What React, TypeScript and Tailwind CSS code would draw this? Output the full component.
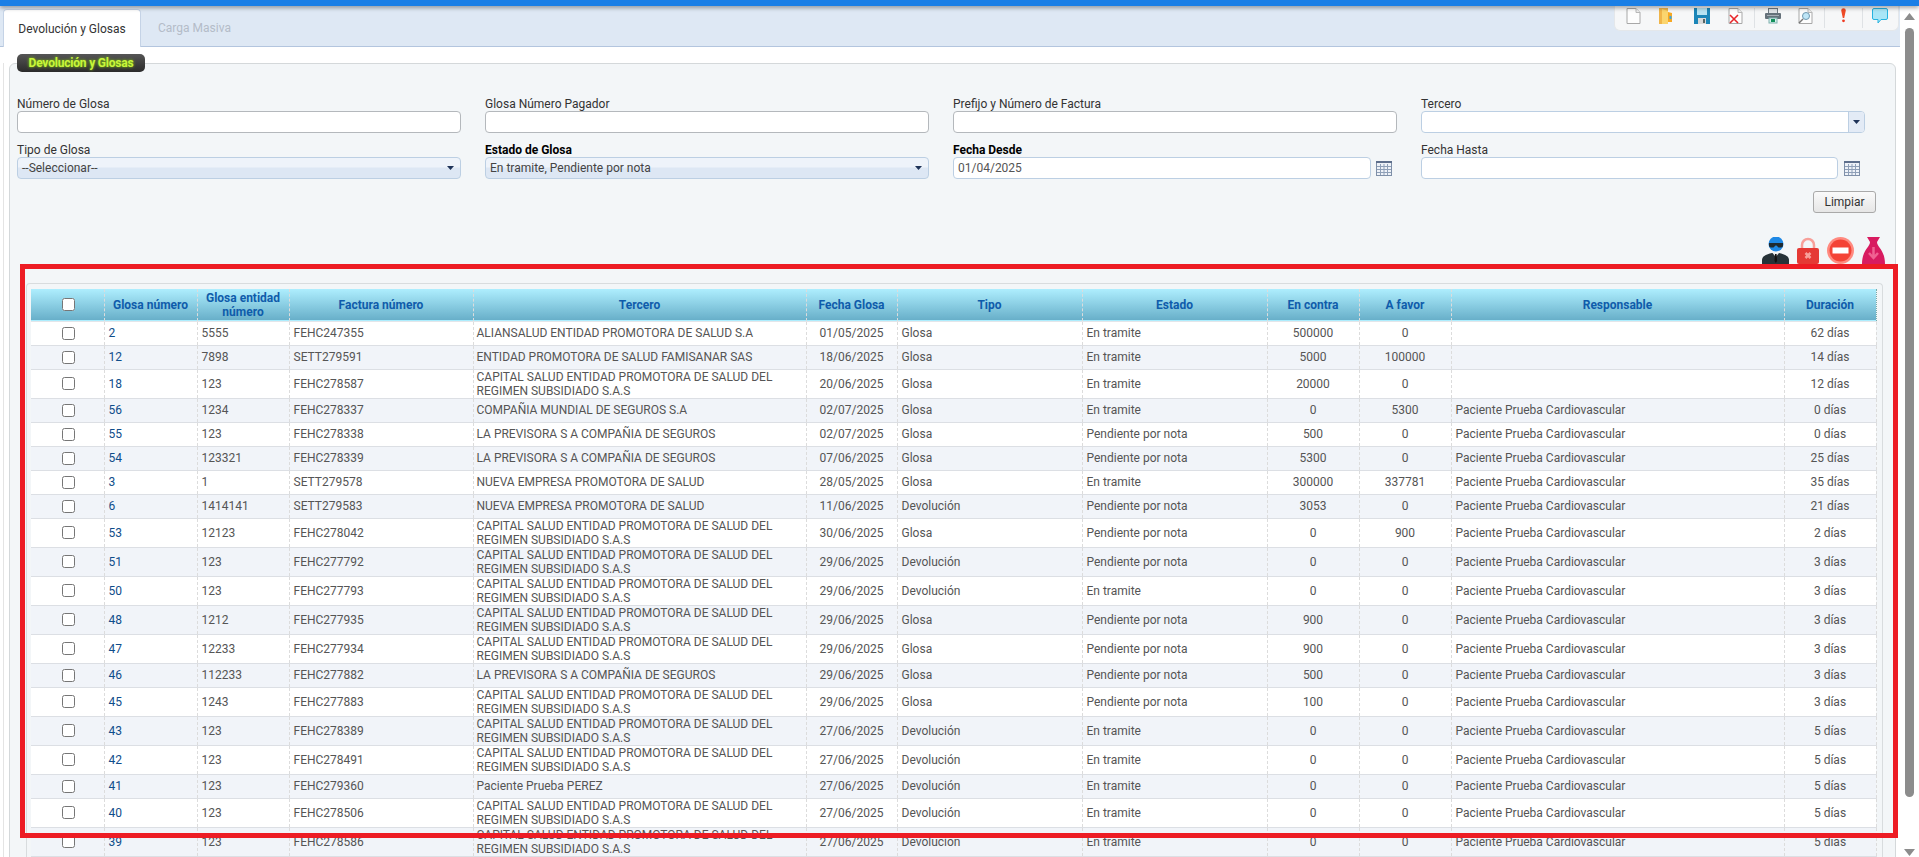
import React from "react";

const CAP = "CAPITAL SALUD ENTIDAD PROMOTORA DE SALUD DEL REGIMEN SUBSIDIADO S.A.S";
const LPS = "LA PREVISORA S A COMPAÑIA DE SEGUROS";
const NEPS = "NUEVA EMPRESA PROMOTORA DE SALUD";
const PAC = "Paciente Prueba Cardiovascular";
const TR = "En tramite";
const PN = "Pendiente por nota";

type Row = [string, string, string, string, string, string, string, string, string, string, string];

const ROWS: Row[] = [
  ["2", "5555", "FEHC247355", "ALIANSALUD ENTIDAD PROMOTORA DE SALUD S.A", "01/05/2025", "Glosa", TR, "500000", "0", "", "62 días"],
  ["12", "7898", "SETT279591", "ENTIDAD PROMOTORA DE SALUD FAMISANAR SAS", "18/06/2025", "Glosa", TR, "5000", "100000", "", "14 días"],
  ["18", "123", "FEHC278587", CAP, "20/06/2025", "Glosa", TR, "20000", "0", "", "12 días"],
  ["56", "1234", "FEHC278337", "COMPAÑIA MUNDIAL DE SEGUROS S.A", "02/07/2025", "Glosa", TR, "0", "5300", PAC, "0 días"],
  ["55", "123", "FEHC278338", LPS, "02/07/2025", "Glosa", PN, "500", "0", PAC, "0 días"],
  ["54", "123321", "FEHC278339", LPS, "07/06/2025", "Glosa", PN, "5300", "0", PAC, "25 días"],
  ["3", "1", "SETT279578", NEPS, "28/05/2025", "Glosa", TR, "300000", "337781", PAC, "35 días"],
  ["6", "1414141", "SETT279583", NEPS, "11/06/2025", "Devolución", PN, "3053", "0", PAC, "21 días"],
  ["53", "12123", "FEHC278042", CAP, "30/06/2025", "Glosa", PN, "0", "900", PAC, "2 días"],
  ["51", "123", "FEHC277792", CAP, "29/06/2025", "Devolución", PN, "0", "0", PAC, "3 días"],
  ["50", "123", "FEHC277793", CAP, "29/06/2025", "Devolución", TR, "0", "0", PAC, "3 días"],
  ["48", "1212", "FEHC277935", CAP, "29/06/2025", "Glosa", PN, "900", "0", PAC, "3 días"],
  ["47", "12233", "FEHC277934", CAP, "29/06/2025", "Glosa", PN, "900", "0", PAC, "3 días"],
  ["46", "112233", "FEHC277882", LPS, "29/06/2025", "Glosa", PN, "500", "0", PAC, "3 días"],
  ["45", "1243", "FEHC277883", CAP, "29/06/2025", "Glosa", PN, "100", "0", PAC, "3 días"],
  ["43", "123", "FEHC278389", CAP, "27/06/2025", "Devolución", TR, "0", "0", PAC, "5 días"],
  ["42", "123", "FEHC278491", CAP, "27/06/2025", "Devolución", TR, "0", "0", PAC, "5 días"],
  ["41", "123", "FEHC279360", "Paciente Prueba PEREZ", "27/06/2025", "Devolución", TR, "0", "0", PAC, "5 días"],
  ["40", "123", "FEHC278506", CAP, "27/06/2025", "Devolución", TR, "0", "0", PAC, "5 días"],
  ["39", "123", "FEHC278586", CAP, "27/06/2025", "Devolución", TR, "0", "0", PAC, "5 días"],
];

const HEADERS = [
  "Glosa número",
  "Glosa entidad número",
  "Factura número",
  "Tercero",
  "Fecha Glosa",
  "Tipo",
  "Estado",
  "En contra",
  "A favor",
  "Responsable",
  "Duración",
];

const WIDTHS = [73, 93, 92, 184, 333, 91, 185, 185, 92, 92, 333, 92];
const SEP = "border-r border-dashed border-r-[#dcdcdc]";

function Calendar() {
  return (
    <svg width="16" height="15" viewBox="0 0 16 15" className="shrink-0">
      <rect x="0.5" y="0.5" width="15" height="14" fill="#eef2f8" stroke="#7e8fa8" />
      <rect x="0" y="0" width="16" height="2" fill="#5e6f8c" />
      <path d="M1 5.5h14M1 8.5h14M1 11.5h14M4.5 3v11M8 3v11M11.5 3v11" stroke="#8fa0b8" strokeWidth="1" fill="none" />
    </svg>
  );
}

function Arrow() {
  return (
    <svg width="7" height="4" viewBox="0 0 7 4">
      <path d="M0 0h7L3.5 4z" fill="#1e3358" />
    </svg>
  );
}

function Doc({ children }: { children?: React.ReactNode }) {
  return (
    <svg width="15" height="16" viewBox="0 0 15 16">
      <path d="M1 .5h9l4 4v11H1z" fill="#fdfdfd" stroke="#a8a8a8" />
      <path d="M10 .5v4h4" fill="#eee" stroke="#b8b8b8" />
      {children}
    </svg>
  );
}

function Folder() {
  return (
    <svg width="14" height="16" viewBox="0 0 14 16">
      <path d="M0 0h9v16H0z" fill="#f0b54a" />
      <path d="M3 1l6 2v13H3z" fill="#fbd56e" />
      <path d="M9 4l4 1v9H9z" fill="#f7a823" />
      <rect x="10.5" y="8" width="2" height="3" fill="#3aa6e0" />
    </svg>
  );
}

function Save() {
  return (
    <svg width="16" height="16" viewBox="0 0 16 16">
      <path d="M0 0h16v16H0z" fill="#1b86b8" />
      <rect x="3" y="0" width="10" height="7" fill="#b6e3f2" />
      <rect x="4" y="10" width="8" height="6" fill="#d9d9d9" />
      <rect x="9" y="11" width="2" height="4" fill="#566" />
    </svg>
  );
}

function Printer() {
  return (
    <svg width="16" height="16" viewBox="0 0 16 16">
      <rect x="3.5" y="0.5" width="9" height="5" fill="#dfe3e6" stroke="#6f7a82" />
      <rect x="0" y="5" width="16" height="6" rx="1" fill="#65717a" />
      <rect x="2" y="7" width="12" height="1" fill="#a5afb6" />
      <rect x="4" y="10" width="8" height="5" fill="#d8f1ee" stroke="#7fb0ad" />
      <rect x="6" y="11" width="4" height="3" fill="#12905a" />
    </svg>
  );
}

function Bang() {
  return (
    <svg width="7" height="15" viewBox="0 0 7 15">
      <path d="M1.2 2.5a2.3 2.3 0 0 1 4.6 0L4.2 10H2.8z" fill="#ef4a26" />
      <circle cx="3.5" cy="12.8" r="1.4" fill="#ef3a22" />
    </svg>
  );
}

function Chat() {
  return (
    <svg width="16" height="16" viewBox="0 0 16 16">
      <path d="M2 .5h12a1.5 1.5 0 0 1 1.5 1.5v8a1.5 1.5 0 0 1-1.5 1.5H9L6 15v-3.5H2A1.5 1.5 0 0 1 .5 10V2A1.5 1.5 0 0 1 2 .5z" fill="#a9e6f7" stroke="#26b3e0" />
    </svg>
  );
}

function Agent() {
  return (
    <svg width="27" height="27" viewBox="0 0 27 27">
      <circle cx="14" cy="7" r="7.5" fill="#1e88e5" />
      <path d="M7 6h14v2.5a2 2 0 0 1-2 2h-2.5l-2-2h-1l-2 2H9a2 2 0 0 1-2-2z" fill="#1f2a30" />
      <path d="M0 27v-4c0-4 5-6 10-7h7c5 1 10 3 10 7v4z" fill="#263238" />
      <path d="M10.5 16h6.5l-3.2 4z" fill="#eceff1" />
      <path d="M13 17h1.6l.5 7-1.3 2-1.3-2z" fill="#111" />
    </svg>
  );
}

function Lock() {
  return (
    <svg width="22" height="27" viewBox="0 0 22 27">
      <path d="M5 12V8a6 6 0 0 1 12 0v4" fill="none" stroke="#f7a09a" strokeWidth="2.5" />
      <rect x="0" y="11" width="22" height="16" rx="2" fill="#e53935" />
      <path d="M8.5 16l5 5M13.5 16l-5 5" stroke="#f7a09a" strokeWidth="2.5" />
    </svg>
  );
}

function NoEntry() {
  return (
    <svg width="27" height="27" viewBox="0 0 27 27">
      <circle cx="13.5" cy="13.5" r="13.5" fill="#ff8a80" />
      <circle cx="13.5" cy="13.5" r="11" fill="#f44336" />
      <rect x="5.5" y="10.5" width="16" height="6" fill="#fff" />
    </svg>
  );
}

function Bag() {
  return (
    <svg width="23" height="27" viewBox="0 0 23 27">
      <path d="M5 0h13l-3 5H8z" fill="#d81b60" />
      <path d="M8 5h7c0 5 8 8 8 22H0C0 13 8 10 8 5z" fill="#d81b60" />
      <path d="M11.5 10v10M7 16l4.5 5 4.5-5" fill="none" stroke="#f06292" strokeWidth="2.5" />
    </svg>
  );
}

function Sep({ className }: { className: string }) {
  return <div className={`h-[20px] w-px self-start bg-[#dfe2e5] ${className}`} />;
}

function Toolbar() {
  return (
    <div className="flex h-[25px] w-[285px] items-start rounded-b-md border border-t-0 border-[#e4e7ea] bg-[#f6f7f8] pt-[2px]">
      <div className="ml-[11px]"><Doc /></div>
      <div className="ml-[18px]"><Folder /></div>
      <div className="ml-[21px]"><Save /></div>
      <div className="ml-[18px]">
        <Doc>
          <path d="M2 7l8 8M10 7l-8 8" stroke="#e8262a" strokeWidth="1.6" />
        </Doc>
      </div>
      <Sep className="ml-[11px]" />
      <div className="ml-[10px]"><Printer /></div>
      <div className="ml-[17px]">
        <Doc>
          <circle cx="8" cy="8" r="3.5" fill="#bfe6f7" stroke="#6f98b0" />
          <path d="M5 11l-4 4" stroke="#777" strokeWidth="1.5" />
        </Doc>
      </div>
      <Sep className="ml-[11px]" />
      <div className="ml-[15px]"><Bang /></div>
      <Sep className="ml-[15px]" />
      <div className="ml-[9px]"><Chat /></div>
    </div>
  );
}

function Field({ label, bold, children }: { label: string; bold?: boolean; children: React.ReactNode }) {
  return (
    <div>
      <div className={`h-[14px] text-[12px] leading-[14px] ${bold ? "font-bold text-black" : "text-[#333]"}`}>{label}</div>
      {children}
    </div>
  );
}

const INPUT = "block h-[22px] w-full rounded-[4px] border bg-white px-[4px] text-[12px] text-[#555] outline-none";

function Select({ value }: { value: string }) {
  return (
    <div className="flex h-[22px] items-center justify-between rounded-[4px] border border-[#bccfe3] bg-[linear-gradient(#eef3fa_0%,#eef3fa_45%,#dde7f4_50%,#dde7f4_100%)] pl-[4px] pr-[6px] text-[12px] text-[#444]">
      <span>{value}</span>
      <Arrow />
    </div>
  );
}

function Filters() {
  return (
    <div className="ml-[7px] mt-[33px] grid grid-cols-[444px_444px_444px_444px] gap-x-[24px] gap-y-[10px]">
      <Field label="Número de Glosa">
        <input className={`${INPUT} border-[#b4b8bc]`} />
      </Field>
      <Field label="Glosa Número Pagador">
        <input className={`${INPUT} border-[#b4b8bc]`} />
      </Field>
      <Field label="Prefijo y Número de Factura">
        <input className={`${INPUT} border-[#b4b8bc]`} />
      </Field>
      <Field label="Tercero">
        <div className="flex h-[22px] overflow-hidden rounded-[4px] border border-[#bccfe3] bg-white">
          <div className="flex-1" />
          <div className="flex w-[16px] items-center justify-center border-l border-[#bccfe3] bg-[#e3ebf6]">
            <Arrow />
          </div>
        </div>
      </Field>
      <Field label="Tipo de Glosa">
        <Select value="--Seleccionar--" />
      </Field>
      <Field label="Estado de Glosa" bold>
        <Select value="En tramite, Pendiente por nota" />
      </Field>
      <Field label="Fecha Desde" bold>
        <div className="flex items-center gap-[5px] pr-[5px]">
          <input className={`${INPUT} border-[#bccfe3]`} defaultValue="01/04/2025" />
          <Calendar />
        </div>
      </Field>
      <Field label="Fecha Hasta">
        <div className="flex items-center gap-[6px] pr-[5px]">
          <input className={`${INPUT} border-[#bccfe3]`} />
          <Calendar />
        </div>
      </Field>
    </div>
  );
}

function GlosasTable() {
  return (
    <table className="w-[1845px] table-fixed border-collapse text-[12px] leading-[14px] text-[#555]">
      <colgroup>
        {WIDTHS.map((w, i) => (
          <col key={i} style={{ width: w }} />
        ))}
      </colgroup>
      <thead>
        <tr className="h-[32px] border-b border-[#e3e6ea] bg-[linear-gradient(#aeeefe,#68afc9)]">
          <th className={SEP}>
            <input type="checkbox" className="relative left-[1px] mx-auto block" />
          </th>
          {HEADERS.map((h, i) => (
            <th key={h} className={`px-[4px] text-center font-bold text-[#0f5cab] ${i < HEADERS.length - 1 ? SEP : "border-r border-dotted border-r-[#7aa]"}`}>
              {h}
            </th>
          ))}
        </tr>
      </thead>
      <tbody>
        {ROWS.map((r, idx) => (
          <tr
            key={r[0]}
            className={`${r[3] === CAP ? "h-[29px]" : "h-[24px]"} border-b border-[#dcdfe4] ${idx % 2 ? "bg-[#f1f4f9]" : "bg-white"}`}
          >
            <td className={SEP}>
              <input type="checkbox" className="relative left-[1px] mx-auto block" />
            </td>
            <td className={`px-[4px] text-[#0f4d8a] ${SEP}`}>{r[0]}</td>
            <td className={`px-[4px] ${SEP}`}>{r[1]}</td>
            <td className={`px-[4px] ${SEP}`}>{r[2]}</td>
            <td className={`py-0 pl-[3px] pr-[4px] ${SEP}`}>{r[3]}</td>
            <td className={`px-[4px] text-center ${SEP}`}>{r[4]}</td>
            <td className={`px-[4px] ${SEP}`}>{r[5]}</td>
            <td className={`px-[4px] ${SEP}`}>{r[6]}</td>
            <td className={`px-[4px] text-center ${SEP}`}>{r[7]}</td>
            <td className={`px-[4px] text-center ${SEP}`}>{r[8]}</td>
            <td className={`px-[4px] ${SEP}`}>{r[9]}</td>
            <td className={`px-[4px] text-center ${SEP}`}>{r[10]}</td>
          </tr>
        ))}
      </tbody>
    </table>
  );
}

export default function App() {
  return (
    <div className="relative flex h-[857px] flex-col overflow-hidden bg-white font-['Roboto',sans-serif]">
      <div className="relative z-10 h-[6px] shrink-0 bg-[#1a7fe6] shadow-[0_2px_4px_rgba(0,0,0,0.35)]" />

      <div className="flex min-h-0 flex-1">
        <div className="w-[1900px] shrink-0">
          <div className="flex h-[41px] items-start justify-between border-b border-[#b3c5de] bg-[#dee8f4] pl-[3px] pr-px">
            <div className="flex items-start pt-[3px]">
              <div className="flex h-[38px] w-[138px] items-center justify-center rounded-t-[4px] border border-b-0 border-[#c5d3e6] bg-white text-[12px] text-[#333]">
                Devolución y Glosas
              </div>
              <div className="ml-[17px] flex h-[38px] items-center text-[12px] text-[#b4bcc8]">Carga Masiva</div>
            </div>
            <Toolbar />
          </div>

          <div className="ml-[3px] mr-[4px] border-l border-[#e4e4e4] pl-[5px]">
            <div className="relative mt-[16px] rounded-t-md border border-[#d4d8da] bg-[#f3f6f8]">
              <div className="absolute left-[7px] top-[-10px] flex h-[18px] w-[128px] items-center justify-center rounded-[5px] bg-[linear-gradient(#555,#2b2b2b)] text-[12px] font-bold tracking-[-0.2px] text-[#c8f53c] [text-shadow:0_0_3px_#8fe000]">
                Devolución y Glosas
              </div>

              <Filters />

              <div className="mr-[19px] mt-[12px] flex justify-end">
                <button className="h-[22px] w-[63px] rounded-[3px] border border-[#a9a9a9] bg-[linear-gradient(#fafafa,#e6e6e6)] text-[12px] text-[#333]">
                  Limpiar
                </button>
              </div>

              <div className="mr-[10px] mt-[24px] flex h-[27px] items-start justify-end gap-[8px] overflow-hidden">
                <Agent />
                <Lock />
                <NoEntry />
                <Bag />
              </div>

              <div className="ml-[16px] mr-[12px] mt-[19px] rounded-t-[4px] border border-b-0 border-[#d8dcde] pb-[20px] pl-[4px] pr-[6px] pt-[5px]">
                <GlosasTable />
              </div>
            </div>
          </div>
        </div>

        <div className="flex w-[19px] shrink-0 flex-col items-center bg-white pt-[7px]">
          <svg width="11" height="7" viewBox="0 0 11 7" className="-ml-[1px]">
            <path d="M0 7L5.5 0 11 7z" fill="#8c8c8c" />
          </svg>
          <div className="-ml-[1px] mt-[8px] h-[769px] w-[9px] rounded-full bg-[#8c8c8c]" />
          <svg width="11" height="7" viewBox="0 0 11 7" className="-ml-[1px] mt-[52px]">
            <path d="M0 0L5.5 7 11 0z" fill="#8c8c8c" />
          </svg>
        </div>
      </div>

      {/* annotation frame drawn over the screenshot */}
      <div className="pointer-events-none absolute left-[20px] top-[264px] h-[574px] w-[1878px] border-[5px] border-[#ed1c24]" />
    </div>
  );
}
